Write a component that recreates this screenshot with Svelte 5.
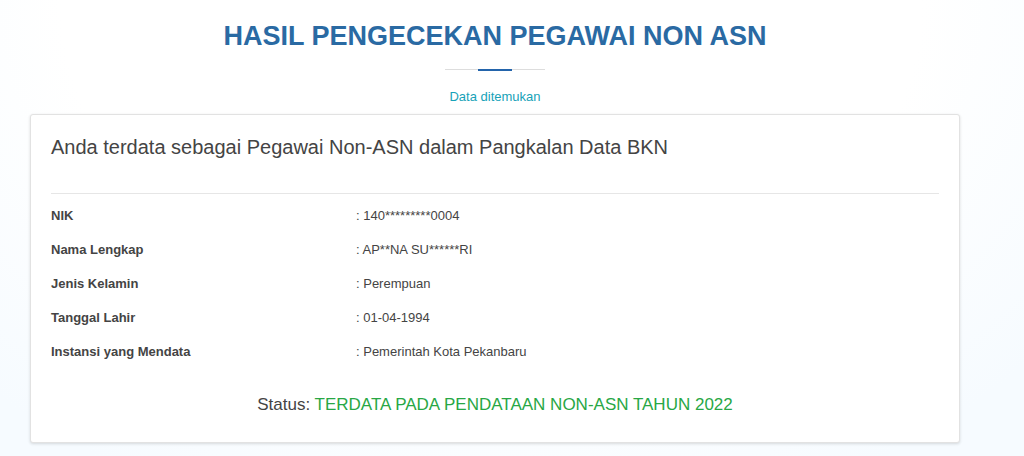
<script>
  const rows = [
    ['NIK', '140*********0004'],
    ['Nama Lengkap', 'AP**NA SU******RI'],
    ['Jenis Kelamin', 'Perempuan'],
    ['Tanggal Lahir', '01-04-1994'],
    ['Instansi yang Mendata', 'Pemerintah Kota Pekanbaru'],
  ];
</script>

<main>
  <header>
    <h1>HASIL PENGECEKAN PEGAWAI NON ASN</h1>
    <div class="rule"><span></span></div>
    <p>Data ditemukan</p>
  </header>
  <section class="card">
    <h2>Anda terdata sebagai Pegawai Non-ASN dalam Pangkalan Data BKN</h2>
    <hr />
    <table>
      <tbody>
        {#each rows as [label, value]}
          <tr><th scope="row">{label}</th><td>: {value}</td></tr>
        {/each}
      </tbody>
    </table>
    <p class="status">Status: <span>TERDATA PADA PENDATAAN NON-ASN TAHUN 2022</span></p>
  </section>
</main>

<style>
  :global(body) {
    margin: 0;
    background: radial-gradient(ellipse 70% 120% at 48% 0%, #fff 60%, #f6fbff 100%);
    font-family: "Liberation Sans", Arial, sans-serif;
    color: #444;
  }
  main {
    padding: 19px 64px 13px 30px;
  }
  header {
    text-align: center;
  }
  h1 {
    margin: 0;
    font-size: 27px;
    line-height: 34px;
    font-weight: 700;
    color: #2a6aa3;
  }
  .rule {
    width: 100px;
    height: 2px;
    margin: 16px auto 0;
    display: flex;
    justify-content: center;
    background: linear-gradient(#ddd, #ddd) top / 100% 1px no-repeat;
  }
  .rule span {
    width: 34px;
    height: 2px;
    background: #2364ab;
  }
  header p {
    margin: 16px 0 7px;
    font-size: 13px;
    line-height: 20px;
    color: #17a2b8;
  }
  .card {
    padding: 19px 20px;
    border: 1px solid #e2e2e2;
    border-radius: 3px;
    background: #fff;
    box-shadow: 0 1px 3px rgba(0, 0, 0, 0.14);
  }
  h2 {
    margin: 0;
    font-size: 20px;
    line-height: 26px;
    font-weight: 400;
  }
  hr {
    margin: 33px 0 5px;
    border: 0;
    border-top: 1px solid #e6e6e6;
  }
  table {
    width: 100%;
    border-collapse: collapse;
    table-layout: fixed;
    font-size: 13px;
    line-height: 20px;
  }
  th, td {
    padding: 7px 0;
    text-align: left;
  }
  th {
    width: 305px;
  }
  .status {
    margin: 24px 0 6px;
    font-size: 17px;
    line-height: 24px;
    text-align: center;
  }
  .status span {
    color: #28a745;
  }
</style>
